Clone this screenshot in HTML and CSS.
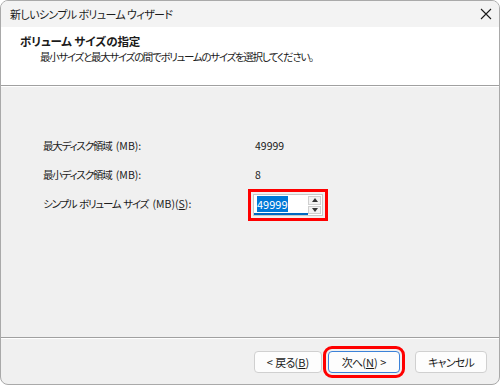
FILE: index.html
```html
<!DOCTYPE html>
<html lang="ja">
<head>
<meta charset="utf-8">
<link rel="stylesheet" href="styles.css">
</head>
<body>
<div class="window">
  <div class="titlebar">
    <span class="title">新しいシンプル ボリューム ウィザード</span>
    <svg class="close" width="12" height="12" viewBox="0 0 12 12"><path d="M1 1L11 11M11 1L1 11" stroke="#1a1a1a" stroke-width="1.1" fill="none"/></svg>
  </div>
  <div class="header">
    <div class="h-title">ボリューム サイズの指定</div>
    <div class="h-sub">最小サイズと最大サイズの間でボリュームのサイズを選択してください。</div>
  </div>
  <div class="sep"></div>
  <div class="body">
    <div class="grid">
      <div class="label">最大ディスク領域<span class="l"> (MB):</span></div>
      <div class="value">49999</div>
      <div class="label">最小ディスク領域<span class="l"> (MB):</span></div>
      <div class="value">8</div>
      <div class="label">シンプル ボリューム サイズ<span class="l"> (MB)(<u>S</u>):</span></div>
      <div class="value">
        <div class="spin mark">
          <div class="spin-field"><span class="sel">49999</span></div>
          <div class="spin-btns">
            <div class="sb"><svg width="6" height="4" viewBox="0 0 6 4"><path d="M0 4L3 0L6 4Z" fill="#333"/></svg></div>
            <div class="sb"><svg width="6" height="4" viewBox="0 0 6 4"><path d="M0 0L3 4L6 0Z" fill="#333"/></svg></div>
          </div>
        </div>
      </div>
    </div>
  </div>
  <div class="sep"></div>
  <div class="footer">
    <button class="btn back"><span class="l">&lt; </span>戻る<span class="l">(<u>B</u>)</span></button>
    <button class="btn next mark">次へ<span class="l">(<u>N</u>) &gt;</span></button>
    <button class="btn cancel">キャンセル</button>
  </div>
</div>
</body>
</html>
```
FILE: styles.css
```css
* { box-sizing: border-box; }
html, body { margin: 0; padding: 0; background: #ffffff; }
body {
  font-family: "Noto Sans CJK JP", "Noto Sans", sans-serif;
  font-size: 10.5px;
  letter-spacing: -1.3px;
  color: #1b1b1b;
  font-feature-settings: "palt";
}
.l { letter-spacing: 0; word-spacing: 0; }
.label .l { margin-left: 2px; }
.window {
  width: 500px;
  height: 385px;
  border: 1px solid #a9a9a9;
  border-radius: 8px;
  overflow: hidden;
  display: flex;
  flex-direction: column;
  background: #f0f0f0;
}
.titlebar {
  height: 26px;
  flex: none;
  background: #f3f3f3;
  display: flex;
  align-items: center;
  justify-content: space-between;
  padding: 0 7px 0 9px;
}
.title { font-size: 11px; letter-spacing: -0.6px; line-height: 1; }
.close { display: block; }
.header {
  height: 58px;
  flex: none;
  background: #ffffff;
  padding: 7px 0 0 19px;
  line-height: 15px;
}
.h-title { font-weight: bold; font-size: 11.5px; letter-spacing: -0.1px; }
.h-sub { padding-left: 20px; }
.sep {
  flex: none;
  height: 2px;
  border-top: 1px solid #a0a0a0;
  border-bottom: 1px solid #ffffff;
}
.body {
  flex: 1;
  padding: 44px 0 0 42px;
}
.grid {
  display: grid;
  grid-template-columns: 212px auto;
  grid-auto-rows: 29px;
  align-items: center;
}
.label { letter-spacing: -1.2px; word-spacing: 1.5px; }
.value { letter-spacing: 0; }
.spin {
  width: 70px;
  height: 22px;
  display: flex;
  background: #ffffff;
  border: 1px solid #c8c8c8;
  margin-top: 3px;
  margin-left: -2px;
}
.mark {
  outline: 3px solid #ff0000;
  outline-offset: 2px;
}
.spin-field {
  flex: 1;
  border-bottom: 2px solid #0067c0;
  padding: 2px 0 0 3px;
  line-height: 15px;
  font-size: 11px;
}
.sel {
  background: #0078d7;
  color: #ffffff;
}
.spin-btns {
  width: 14px;
  display: flex;
  flex-direction: column;
  gap: 1px;
  padding: 1px 1px 1px 0;
}
.sb {
  flex: 1;
  border: 1px solid #cfcfcf;
  background: #f2f2f2;
  display: flex;
  align-items: center;
  justify-content: center;
}
.sb svg { display: block; }
.footer {
  height: 45px;
  flex: none;
  display: flex;
  justify-content: flex-end;
  align-items: flex-start;
  padding: 12px 12px 0 0;
}
.btn {
  font: inherit;
  letter-spacing: -0.8px;
  font-size: 11px;
  color: #1b1b1b;
  height: 22px;
  width: 72px;
  background: #fdfdfd;
  border: 1px solid #d0d0d0;
  border-radius: 4px;
  padding: 0;
  line-height: 18px;
}
.back { width: 68px; }
.next { margin-left: 6px; border-color: #3c82d8; }
.cancel { margin-left: 15px; }
```
